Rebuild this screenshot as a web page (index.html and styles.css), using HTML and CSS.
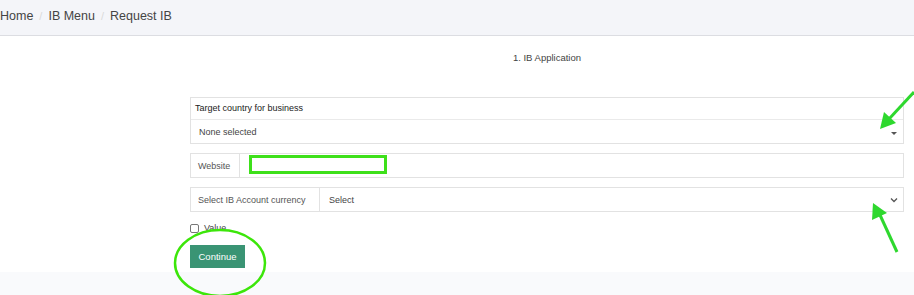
FILE: index.html
```html
<!DOCTYPE html>
<html>
<head>
<meta charset="utf-8">
<link rel="stylesheet" href="styles.css">
</head>
<body>
<nav class="crumbs">
  <span class="crumb">Home</span><span class="sep">/</span><span class="crumb">IB Menu</span><span class="sep">/</span><span class="crumb">Request IB</span>
</nav>
<main class="page">
  <div class="step">1. IB Application</div>
  <form class="form">
    <div class="panel">
      <div class="panel-head">Target country for business</div>
      <div class="panel-body">
        <span>None selected</span>
        <span class="caret"></span>
      </div>
    </div>
    <div class="group">
      <div class="addon addon-web">Website</div>
      <div class="field"><span class="mark-box"></span></div>
    </div>
    <div class="group">
      <div class="addon addon-cur">Select IB Account currency</div>
      <div class="field select">
        <span>Select</span>
        <svg class="chev" width="8" height="6" viewBox="0 0 8 6"><path d="M1 1.5 L4 4.5 L7 1.5" fill="none" stroke="#555" stroke-width="1.3"/></svg>
      </div>
    </div>
    <label class="check"><span class="box"></span>Value</label>
    <div class="btn-row">
      <button type="button" class="btn">Continue</button>
    </div>
  </form>
</main>
<footer class="foot"></footer>
<svg class="annot" width="914" height="295" viewBox="0 0 914 295">
  <g fill="#2ed82e" stroke="#2ed82e">
    <line x1="914" y1="92" x2="889" y2="119" stroke-width="3"/>
    <polygon points="880,129 884,112 896,123" stroke="none"/>
    <line x1="897" y1="252" x2="880" y2="215" stroke-width="3"/>
    <polygon points="873,203 872,220 887,213" stroke="none"/>
  </g>
  <ellipse cx="220" cy="263" rx="45" ry="33" fill="none" stroke="#3ce60a" stroke-width="2.5"/>
</svg>
</body>
</html>
```
FILE: styles.css
```css
* { box-sizing: border-box; }
html, body { margin: 0; padding: 0; }
body {
  width: 914px;
  height: 295px;
  overflow: hidden;
  background: #fff;
  font-family: "Liberation Sans", Arial, sans-serif;
  color: #333;
  position: relative;
}
.crumbs {
  height: 36px;
  background: #f4f5f9;
  border-bottom: 1px solid #dcdde2;
  display: flex;
  align-items: center;
  font-size: 12.5px;
  color: #444;
  padding-left: 0;
  padding-bottom: 3px;
}
.sep {
  color: #dadada;
  margin: 0 6px;
  font-size: 11px;
}
.page {
  height: 236px;
  display: flex;
  flex-direction: column;
}
.step {
  text-align: center;
  font-size: 9.5px;
  color: #444;
  padding-left: 180px;
  margin-top: 16px;
  height: 12px;
  line-height: 12px;
}
.form {
  margin: 33px 10px 0 190px;
  display: flex;
  flex-direction: column;
  font-size: 9px;
}
.panel {
  border: 1px solid #e2e2e2;
  height: 47px;
  display: flex;
  flex-direction: column;
}
.panel-head {
  height: 22px;
  line-height: 21px;
  padding-left: 4px;
  color: #222;
  border-bottom: 1px solid #eaeaea;
}
.panel-body {
  flex: 1;
  display: flex;
  align-items: center;
  padding-left: 8px;
  padding-right: 10px;
  color: #444;
  justify-content: space-between;
  padding-top: 1px;
}
.caret {
  width: 0; height: 0;
  border-left: 3px solid transparent;
  border-right: 3px solid transparent;
  border-top: 3px solid #555;
  margin-top: 2px;
  margin-right: -4px;
}
.group {
  margin-top: 9px;
  height: 25px;
  display: flex;
  border: 1px solid #e2e2e2;
}
.addon {
  display: flex;
  align-items: center;
  padding: 0 7px;
  color: #555;
  background: #fff;
  white-space: nowrap;
  border-right: 1px solid #e2e2e2;
}
.addon-web { width: 49px; }
.addon-cur { width: 129px; }
.field {
  flex: 1;
  display: flex;
  align-items: center;
  padding-left: 9px;
  color: #444;
}
.select {
  justify-content: space-between;
  padding-right: 5px;
}
.mark-box {
  width: 138px;
  height: 19px;
  border: 3px solid #3ee01a;
  margin-top: -2px;
}
.check {
  display: flex;
  align-items: center;
  margin-top: 10px;
  color: #444;
  height: 12px;
}
.box {
  width: 9px; height: 9px;
  border: 1px solid #777;
  border-radius: 2px;
  margin-right: 5px;
  background: #fff;
}
.btn-row { margin-top: 11px; display: flex; }
.btn {
  width: 55px;
  height: 23px;
  background: #3a9474;
  border: none;
  color: #fff;
  font-family: "Liberation Sans", Arial, sans-serif;
  font-size: 9.5px;
  padding: 0;
}
.foot {
  height: 23px;
  background: #f9fafc;
}
.annot {
  position: absolute;
  left: 0;
  top: 0;
  pointer-events: none;
}
```
